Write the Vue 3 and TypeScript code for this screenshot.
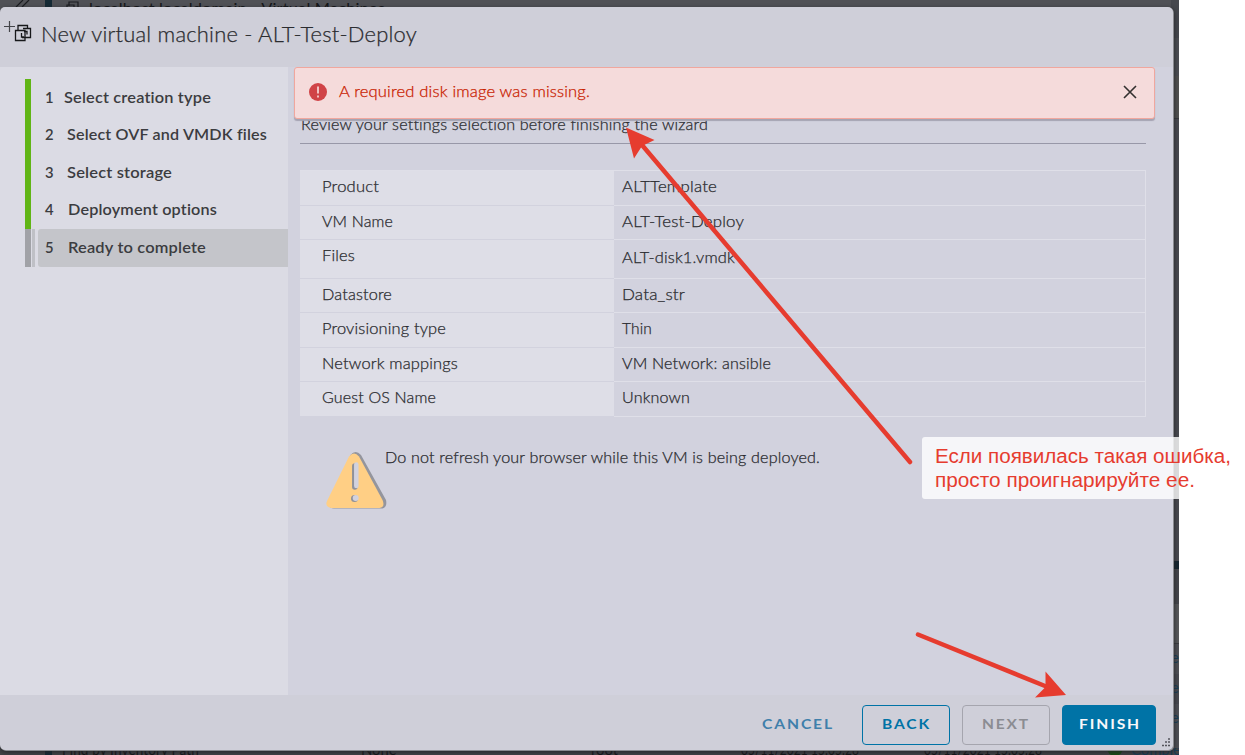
<script setup lang="ts">
import type { Directive } from 'vue'

interface Step { no: number; label: string; width: number; offset: number }
interface Setting { name: string; nameWidth: number; value: string; valueWidth: number; size: string }

// Stretches a line of text horizontally to the given width.
const vFit: Directive<HTMLElement, number> = {
  mounted(el, binding) {
    const natural = el.getBoundingClientRect().width
    if (natural > 0) el.style.transform = `scaleX(${binding.value / natural})`
  },
}

const steps: Step[] = [
  { no: 1, label: 'Select creation type', width: 147, offset: 19 },
  { no: 2, label: 'Select OVF and VMDK files', width: 200, offset: 22 },
  { no: 3, label: 'Select storage', width: 105, offset: 22 },
  { no: 4, label: 'Deployment options', width: 149, offset: 22.5 },
  { no: 5, label: 'Ready to complete', width: 138, offset: 22.5 },
]

const settings: Setting[] = [
  { name: 'Product', nameWidth: 57, value: 'ALTTemplate', valueWidth: 95, size: 'h35' },
  { name: 'VM Name', nameWidth: 71, value: 'ALT-Test-Deploy', valueWidth: 122, size: 'h34' },
  { name: 'Files', nameWidth: 33, value: 'ALT-disk1.vmdk', valueWidth: 113, size: 'h39' },
  { name: 'Datastore', nameWidth: 70, value: 'Data_str', valueWidth: 63, size: 'h34' },
  { name: 'Provisioning type', nameWidth: 124, value: 'Thin', valueWidth: 30, size: 'h35' },
  { name: 'Network mappings', nameWidth: 136, value: 'VM Network: ansible', valueWidth: 149, size: 'h34' },
  { name: 'Guest OS Name', nameWidth: 114, value: 'Unknown', valueWidth: 68, size: 'h35' },
]
</script>

<template>
  <div class="screen">
    <div class="backdrop">
      <div class="crumb">
        <svg class="slashes" width="16" height="8" viewBox="0 0 16 8"><path d="M1 7 8 0M7 7 14 0" /></svg>
        <i class="rail"></i>
        <svg class="crumb-icon" width="14" height="8" viewBox="0 0 14 8"><path d="M3 6V2h9v6M1 8V5h7v3" /></svg>
        <span v-fit="296" class="t">localhost.localdomain - Virtual Machines</span>
      </div>
      <div class="strip">
        <i class="s1"></i><i class="s2"></i><i class="s3"></i><i class="s4"></i><i class="s5"></i><i class="s6"></i>
        <i class="s7"></i><b>e</b><b>e</b><b>e</b>
      </div>
      <div class="task">
        <i class="rail"></i>
        <span class="c1"><span v-fit="137" class="t">Find by Inventory Path</span></span>
        <span class="c2">None</span><span class="c3">root</span>
        <span class="c4"><span v-fit="118" class="t">05/11/2021 15:05:28</span></span>
        <span class="c5"><span v-fit="118" class="t">05/11/2021 15:05:28</span></span>
        <i class="ok"></i><span class="c6">Completed</span>
      </div>
    </div>

    <section class="dialog">
      <header class="head">
        <svg class="vm-icon" width="30" height="24" viewBox="0 0 30 24">
          <path class="plus" d="M1 6.5H12M6.500 1V12" />
          <path d="M15 10V5.500H24.500V8M12.500 10.500H22V20.500H12.500ZM19 17.500H27.500V8.500H20M18.500 13V17H21M24 14.500V11.500H21" />
        </svg>
        <h1><span v-fit="376" class="t">New virtual machine - ALT-Test-Deploy</span></h1>
      </header>

      <div class="body">
        <nav>
          <ol>
            <li v-for="s in steps" :key="s.no" :class="{ current: s.no === 5 }">
              <i class="bar"></i><i class="thin"></i>
              <div class="step">
                <span class="no" :style="{ width: s.offset + 'px' }">{{ s.no }}</span>
                <span v-fit="s.width" class="t">{{ s.label }}</span>
              </div>
            </li>
          </ol>
        </nav>

        <main>
          <p class="intro"><span v-fit="407" class="t">Review your settings selection before finishing the wizard</span></p>
          <div class="table">
            <div v-for="r in settings" :key="r.name" class="row" :class="r.size">
              <div class="name"><span v-fit="r.nameWidth" class="t">{{ r.name }}</span></div>
              <div class="value"><span v-fit="r.valueWidth" class="t">{{ r.value }}</span></div>
            </div>
          </div>
          <div class="notice">
            <svg width="64" height="60" viewBox="0 0 64 60">
              <path class="tri-shadow" d="M25.500 4Q30.500 -2 36 4L61 49Q62.500 56 57.500 57.500H9Q3 57 5 53Z" />
              <path class="tri" d="M24 5.500Q29 -.5 34 5.500L57.500 49Q60.500 56 54.500 57H6.500Q-.5 56 2 50Z" />
              <path class="mark-shadow" d="M29.800 15V36" /><path class="mark" d="M31.300 13.500V35" />
              <circle class="dot-shadow" cx="29.500" cy="47.500" r="3.500" /><circle class="dot" cx="30.700" cy="47" r="3" />
            </svg>
            <p><span v-fit="435" class="t">Do not refresh your browser while this VM is being deployed.</span></p>
          </div>
        </main>
      </div>

      <footer>
        <button class="cancel"><span v-fit="72" class="t">CANCEL</span></button>
        <button class="back"><span v-fit="49" class="t">BACK</span></button>
        <button class="next" disabled><span v-fit="48" class="t">NEXT</span></button>
        <button class="finish"><span v-fit="62" class="t">FINISH</span></button>
      </footer>

      <svg class="grip" width="10" height="10" viewBox="0 0 10 10">
        <path d="M7 1h2M4 4h2M7 4h2M1 7.500h2M4 7.500h2M7 7.500h2" />
      </svg>

      <div class="alert">
        <svg width="18" height="18" viewBox="0 0 18 18">
          <circle cx="9" cy="9" r="9" /><path d="M9 3.500V10.500M9 12.500V14.500" />
        </svg>
        <span class="message"><span v-fit="251" class="t">A required disk image was missing.</span></span>
        <svg class="close" width="14" height="14" viewBox="0 0 14 14"><path d="M1 1 13 13M13 1 1 13" /></svg>
      </div>
    </section>

    <div class="note">
      <span v-fit="296" class="t">Если появилась такая ошибка,</span>
      <span v-fit="260" class="t">просто проигнарируйте ее.</span>
    </div>
    <svg class="arrows" width="1245" height="755" viewBox="0 0 1245 755">
      <path class="shaft" d="M910 462 642 145M918 634.500 1045 686" />
      <path class="tip" d="M626 127.500 654.500 140 642 146 634 158.500ZM1066 695 1045.500 671.500V687L1035 697.500Z" />
    </svg>
  </div>
</template>

<style>
body { margin: 0; background: #fff; overflow: hidden; }
</style>

<style scoped>
.screen { position: relative; width: 1245px; height: 755px; overflow: hidden; font: 300 14.8px/20px Lato, "Open Sans", sans-serif; color: #2b2c30; }
.t { display: inline-block; white-space: nowrap; transform-origin: 0 50%; letter-spacing: .01em; }
main .t, .head .t, .message .t { -webkit-text-stroke: .25px currentColor; }
p, h1, ol { margin: 0; padding: 0; }
svg { display: block; flex: none; fill: none; }

.backdrop { position: relative; width: 1179px; height: 755px; background: #505156; overflow: hidden; color: #151619; display: flex; flex-direction: column; justify-content: space-between; font-weight: 400; }
.crumb { display: flex; height: 8px; align-items: center; padding-left: 15px; overflow: hidden; }
.crumb svg { stroke: #1b1c20; stroke-width: 1.2; }
.rail { width: 7px; height: 8px; background: #152a35; margin-left: 14px; margin-right: 14px; flex: none; }
.crumb .t { margin-left: 9px; margin-top: 7px; }
.strip { position: absolute; right: 0; top: 0; width: 8px; display: flex; flex-direction: column; }
.strip i { display: block; background: #46484e; }
.strip .s1 { height: 38px; }
.strip .s2 { height: 38px; background: #4c4e53; }
.strip .s3 { height: 42px; background: #515150; }
.strip .s4 { height: 443px; background: #48494f; border-top: 1px solid #37383c; box-sizing: border-box; }
.strip .s5 { height: 8px; background: #14252f; }
.strip .s6 { height: 35px; background: #46474c; }
.strip .s7 { height: 39px; background: #58595b; border-bottom: 1px solid #3c3d40; }
.strip b { height: 30px; line-height: 27px; font-weight: 400; color: #173f59; background: #505156; text-indent: 0; }
.strip b:nth-of-type(even) { background: #494a50; }
.task { display: flex; height: 7px; align-items: center; overflow: hidden; padding-left: 31px; background: #434447; position: relative; }
.task span { flex: none; line-height: 16px; }
.task > span { margin-top: -6px; }
.task .rail { margin: 0 10px 0 14px; }
.task .c1 { width: 299px; } .task .c2 { width: 230px; } .task .c3 { width: 150px; }
.task .c4 { width: 183px; } .task .c5 { width: 183px; }
.ok { width: 16px; height: 16px; border-radius: 50%; background: #174e12; flex: none; margin-top: -7px; }
.task .c6 { color: #173f59; margin-left: 8px; }

.dialog { position: absolute; left: 0; top: 7px; width: 1173px; height: 743px; border-radius: 5px; background: #cfcfd9; display: flex; flex-direction: column; box-shadow: 1px 1px 0 #898a8f, 1px 2px 5px #222326; }
.head { height: 60px; flex: none; display: flex; align-items: flex-start; }
.vm-icon { margin: 13px 8px 0 3px; stroke: #17181b; stroke-width: 1.3; }
.vm-icon .plus { stroke: #44454a; stroke-width: 1.2; }
.head h1 { font-size: 20.8px; line-height: 26px; font-weight: 300; margin-top: 14px; }
.body { flex: 1; display: flex; min-height: 0; }
nav { width: 288px; background: #dbdbe4; flex: none; }
ol { list-style: none; padding-top: 12px; }
li { display: flex; height: 37.5px; padding-left: 25px; font-weight: 600; color: #3b3c40; }
.bar { width: 6px; background: #60b515; }
.thin { width: 3px; margin-left: 1px; }
.step { flex: 1; margin-left: 3px; padding-left: 7px; display: flex; align-items: center; border-radius: 3px 0 0 3px; box-sizing: border-box; padding-bottom: 2px; }
.no { display: inline-block; }
.current .bar { background: #a1a2a7; }
.current .thin { background: #bfc0c6; }
.current .step { background: #c4c5ca; }
main { flex: 1; background: #d2d2de; padding: 47px 27px 0 12px; min-width: 0; }
.intro { height: 29px; border-bottom: 1px solid #9898a8; padding-left: 1px; }
.table { width: 846px; margin-top: 26px; box-sizing: border-box; border: 1px solid #dfdfe8; border-bottom: 0; border-left: 0; }
.row { display: flex; box-sizing: border-box; }
.h34 { height: 34px; } .h35 { height: 35px; } .h39 { height: 39px; }
.name, .value { box-sizing: border-box; padding-top: 5px; border-bottom: 1px solid #d2d2de; }
.name { width: 314px; background: #dedee7; padding-left: 21.5px; }
.value { flex: 1; border-color: #dfdfe8; padding-left: 8px; }
.h39 .value { padding-top: 7px; }
.notice { display: flex; padding: 34px 0 0 25px; }
.notice p { margin: -4px 0 0 -4px; }
.tri-shadow { fill: #94959d; }
.tri { fill: #ffcf85; }
.mark-shadow, .mark { stroke-width: 5.500; stroke-linecap: round; stroke: #8f919a; }
.mark { stroke: #d2d2de; stroke-width: 4.500; }
.dot-shadow { fill: #8f919a; }
.dot { fill: #d2d2de; }
footer { height: 55px; flex: none; box-sizing: border-box; display: flex; justify-content: flex-end; padding: 10px 17px 5px 0; }
button { font: 700 14px/20px Lato, sans-serif; height: 40px; padding: 0 0 2px 19px; margin: 0 0 0 12px; width: 88px; border: 1px solid; border-radius: 4px; background: none; text-align: left; color: #0073a6; box-sizing: border-box; }
button .t { letter-spacing: .12em; }
.cancel { width: 110px; border: 0; padding-left: 19.5px; margin-right: -8px; margin-left: 0; color: #3f7fab; }
.cancel + .back { margin-left: 18px; }
.next { color: #8b8c92; border-color: #a5a5ae; }
.finish { width: 94px; padding-left: 15.5px; color: #f7f8fa; background: #0073a6; border-color: #0073a6; }
.grip { position: absolute; right: 2px; bottom: 2px; stroke: #56565d; stroke-width: 1.5; }

.alert { position: absolute; left: 294px; top: 60px; width: 861px; height: 52px; box-sizing: border-box; display: flex; align-items: flex-start; padding: 15px 17px 0 14px; background: #f5dbdb; border: 1px solid #f0a79e; border-radius: 3px; box-shadow: 0 2px 1px #a5a3b2; color: #c92100; }
.alert circle { fill: #d04347; }
.alert path { stroke: #f6d9d9; stroke-width: 1.7; }
.message { margin: -2px auto 0 12px; }
.alert .close { margin-top: 2px; }
.alert .close path { stroke: #33302f; stroke-width: 1.6; }
.note { position: absolute; left: 922px; top: 437px; width: 323px; height: 62px; box-sizing: border-box; padding: 7px 0 0 13px; background: rgba(255, 255, 255, .8); border-radius: 3px; color: #e63c2f; font: 20px/24px "Liberation Sans", Arial, sans-serif; display: flex; flex-direction: column; align-items: flex-start; }
.note .t { letter-spacing: 0; }
.arrows { position: absolute; left: 0; top: 0; pointer-events: none; }
.shaft { stroke: #e63c2f; stroke-width: 4.5; stroke-linecap: round; }
.tip { fill: #e63c2f; }
</style>
